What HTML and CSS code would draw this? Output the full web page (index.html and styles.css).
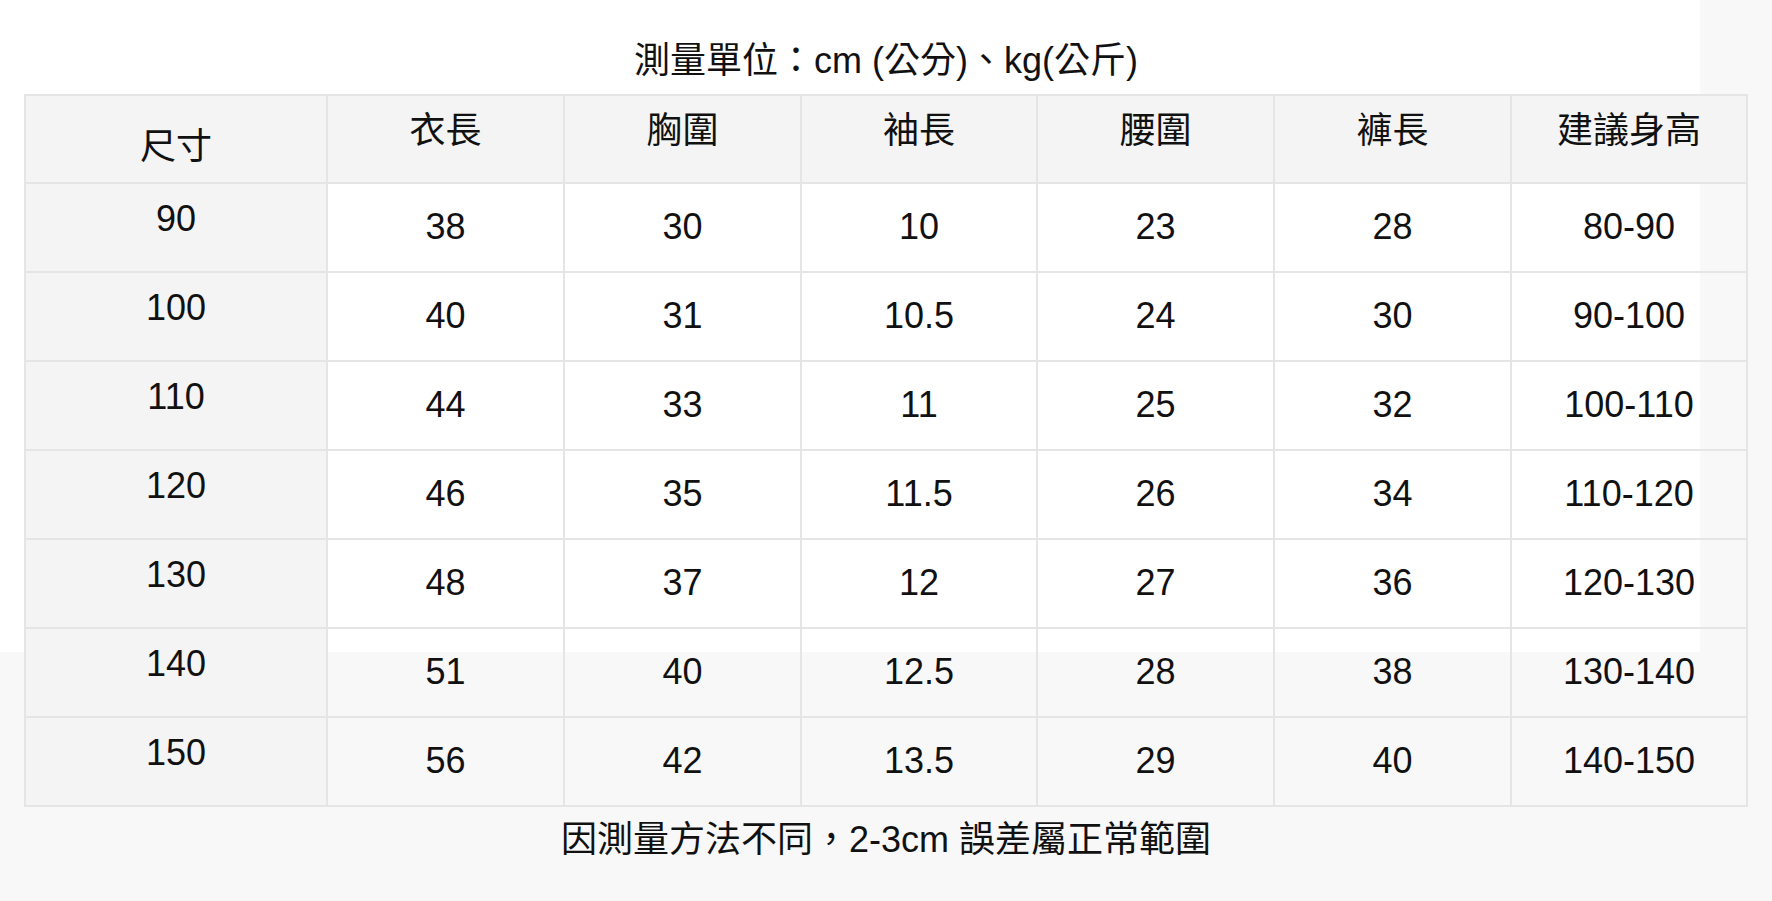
FILE: index.html
```html
<!DOCTYPE html>
<html lang="zh-Hant">
<head>
<meta charset="utf-8">
<title>尺寸表</title>
<link rel="stylesheet" href="styles.css">
</head>
<body>
<div class="page">
  <div class="caption">測量單位：cm (公分)、kg(公斤)</div>
  <div class="size-table">
    <div class="cell head first">尺寸</div>
    <div class="cell head">衣長</div>
    <div class="cell head">胸圍</div>
    <div class="cell head">袖長</div>
    <div class="cell head">腰圍</div>
    <div class="cell head">褲長</div>
    <div class="cell head">建議身高</div>

    <div class="cell first">90</div>
    <div class="cell">38</div><div class="cell">30</div><div class="cell">10</div><div class="cell">23</div><div class="cell">28</div><div class="cell">80-90</div>

    <div class="cell first">100</div>
    <div class="cell">40</div><div class="cell">31</div><div class="cell">10.5</div><div class="cell">24</div><div class="cell">30</div><div class="cell">90-100</div>

    <div class="cell first">110</div>
    <div class="cell">44</div><div class="cell">33</div><div class="cell">11</div><div class="cell">25</div><div class="cell">32</div><div class="cell">100-110</div>

    <div class="cell first">120</div>
    <div class="cell">46</div><div class="cell">35</div><div class="cell">11.5</div><div class="cell">26</div><div class="cell">34</div><div class="cell">110-120</div>

    <div class="cell first">130</div>
    <div class="cell">48</div><div class="cell">37</div><div class="cell">12</div><div class="cell">27</div><div class="cell">36</div><div class="cell">120-130</div>

    <div class="cell first">140</div>
    <div class="cell">51</div><div class="cell">40</div><div class="cell">12.5</div><div class="cell">28</div><div class="cell">38</div><div class="cell">130-140</div>

    <div class="cell first">150</div>
    <div class="cell">56</div><div class="cell">42</div><div class="cell">13.5</div><div class="cell">29</div><div class="cell">40</div><div class="cell">140-150</div>
  </div>
  <div class="note">因測量方法不同，2-3cm 誤差屬正常範圍</div>
</div>
</body>
</html>
```

FILE: styles.css
```css
html, body {
  margin: 0;
  padding: 0;
}

body {
  min-height: 901px;
  background: linear-gradient(#ffffff, #ffffff) 0 0 / 1700px 652px no-repeat, #f8f8f8;
  font-family: "Liberation Sans", "Noto Sans CJK TC", sans-serif;
  font-size: 36px;
  color: #111111;
}

.page {
  display: flex;
  flex-direction: column;
}

.caption {
  text-align: center;
  line-height: 48px;
  padding-top: 37px;
  margin-bottom: 9px;
}

.size-table {
  display: grid;
  grid-template-columns: 302px 237px 237px 236px 237px 237px 236px;
  grid-template-rows: 88px repeat(7, 89px);
  width: 1724px;
  box-sizing: border-box;
  margin-left: 24px;
  border-top: 2px solid #e5e5e5;
  border-left: 2px solid #e5e5e5;
}

.cell {
  box-sizing: border-box;
  border-right: 2px solid #e5e5e5;
  border-bottom: 2px solid #e5e5e5;
  display: flex;
  align-items: center;
  justify-content: center;
  line-height: 40px;
  white-space: nowrap;
  padding-bottom: 2px;
}

.cell.head {
  background: #f4f4f4;
  padding-bottom: 16px;
}

.cell.head.first {
  padding-bottom: 0;
  padding-top: 16px;
}

.cell.first {
  background: #f4f4f4;
  padding-bottom: 18px;
}

.note {
  text-align: center;
  line-height: 48px;
  margin-top: 9px;
}
```
